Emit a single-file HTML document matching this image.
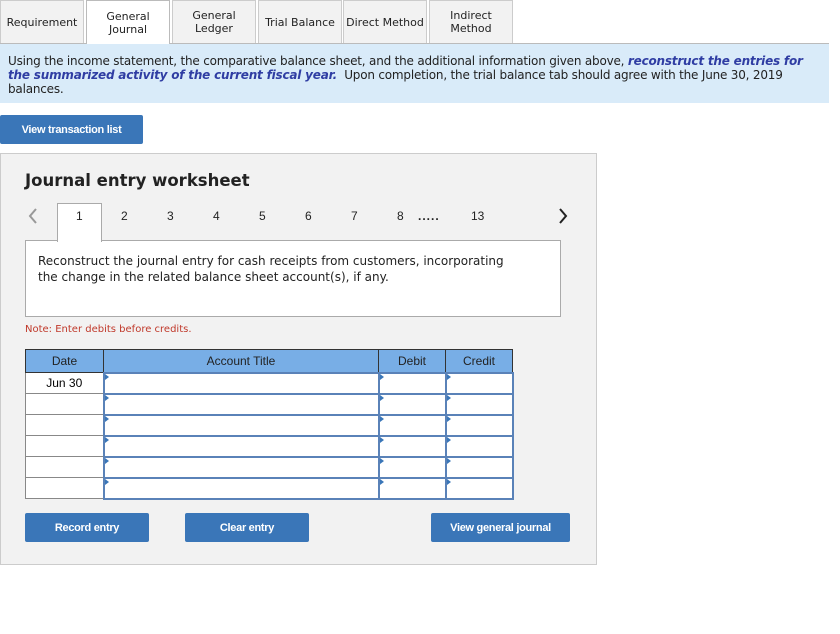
<!DOCTYPE html>
<html><head><meta charset="utf-8"><style>
*{margin:0;padding:0;box-sizing:border-box}
body{width:840px;height:634px;background:#fff;position:relative;font-family:"DejaVu Sans",Verdana,sans-serif;overflow:hidden}
.a{position:absolute}
.tab{position:absolute;top:0;height:43px;background:#f2f2f2;border:1px solid #ccc;border-bottom:none;font-size:11px;color:#222;display:flex;align-items:center;justify-content:center;text-align:center;line-height:13px}
.tab.on{background:#fff;height:44px;z-index:2;border-color:#bbb}
.btn{position:absolute;background:#3a76b8;color:#fff;font-family:"Liberation Sans",Arial,sans-serif;font-weight:bold;font-size:11px;display:flex;align-items:center;justify-content:center;border-radius:2px;letter-spacing:-0.3px}
.pg{position:absolute;top:209px;font-size:12px;color:#222;font-family:"Liberation Sans",Arial,sans-serif}
table{position:absolute;left:25px;top:349px;border-collapse:collapse;font-family:"Liberation Sans",Arial,sans-serif;font-size:12px}
th{background:#78aee6;height:23px;border:1px solid #333;font-weight:normal;color:#222}
td{height:21px;background:#fff;border:1px solid #888}
td.i{border:2px solid #5a82b8;position:relative}
td.i:before{content:"";position:absolute;left:0;top:0;border-left:4px solid #3a76b8;border-top:3px solid transparent;border-bottom:3px solid transparent}
</style></head><body>
<div class="tab" style="left:0;width:84px">Requirement</div>
<div class="tab on" style="left:86px;width:84px">General<br>Journal</div>
<div class="tab" style="left:172px;width:84px">General<br>Ledger</div>
<div class="tab" style="left:258px;width:84px">Trial Balance</div>
<div class="tab" style="left:343px;width:84px">Direct Method</div>
<div class="tab" style="left:429px;width:84px">Indirect<br>Method</div>
<div class="a" style="left:0;top:43px;width:829px;height:60px;background:#d9ebf9;border-top:1px solid #bbb;padding:10px 4px 0 8px;font-size:12px;line-height:14px;color:#222;letter-spacing:-0.2px">Using the income statement, the comparative balance sheet, and the additional information given above, <b style="color:#2f3da3;font-style:italic">reconstruct the entries for the summarized activity of the current fiscal year.</b>&nbsp; Upon completion, the trial balance tab should agree with the June 30, 2019 balances.</div>
<div class="btn" style="left:0;top:115px;width:143px;height:29px">View transaction list</div>
<div class="a" style="left:0;top:153px;width:597px;height:412px;background:#f2f2f2;border:1px solid #ccc"></div>
<div class="a" style="left:25px;top:171px;font-size:16.5px;font-weight:bold;color:#222">Journal entry worksheet</div>
<svg class="a" style="left:28px;top:208px" width="10" height="16"><path d="M8 1 L2 8 L8 15" stroke="#999" stroke-width="2" fill="none"/></svg>
<svg class="a" style="left:558px;top:208px" width="10" height="16"><path d="M2 1 L8 8 L2 15" stroke="#222" stroke-width="2" fill="none"/></svg>
<div class="a" style="left:25px;top:240px;width:536px;height:77px;background:#fff;border:1px solid #aaa"></div>
<div class="a" style="left:57px;top:203px;width:45px;height:39px;background:#fff;border:1px solid #aaa;border-bottom:none"></div>
<div class="pg" style="left:76px">1</div><div class="pg" style="left:121px">2</div><div class="pg" style="left:167px">3</div><div class="pg" style="left:213px">4</div><div class="pg" style="left:259px">5</div><div class="pg" style="left:305px">6</div><div class="pg" style="left:351px">7</div><div class="pg" style="left:397px">8</div><div class="pg" style="left:418px;font-weight:bold;letter-spacing:1px">.....</div><div class="pg" style="left:471px">13</div>
<div class="a" style="left:38px;top:253px;font-size:12px;line-height:16px;color:#222">Reconstruct the journal entry for cash receipts from customers, incorporating<br>the change in the related balance sheet account(s), if any.</div>
<div class="a" style="left:25px;top:324px;font-size:10px;color:#c0392b">Note: Enter debits before credits.</div>
<table>
<tr><th style="width:78px">Date</th><th style="width:275px">Account Title</th><th style="width:67px">Debit</th><th style="width:67px">Credit</th></tr>
<tr><td style="text-align:center">Jun 30</td><td class="i"></td><td class="i"></td><td class="i"></td></tr>
<tr><td></td><td class="i"></td><td class="i"></td><td class="i"></td></tr>
<tr><td></td><td class="i"></td><td class="i"></td><td class="i"></td></tr>
<tr><td></td><td class="i"></td><td class="i"></td><td class="i"></td></tr>
<tr><td></td><td class="i"></td><td class="i"></td><td class="i"></td></tr>
<tr><td></td><td class="i"></td><td class="i"></td><td class="i"></td></tr>
</table>
<div class="btn" style="left:25px;top:513px;width:124px;height:29px">Record entry</div>
<div class="btn" style="left:185px;top:513px;width:124px;height:29px">Clear entry</div>
<div class="btn" style="left:431px;top:513px;width:139px;height:29px">View general journal</div>
</body></html>
